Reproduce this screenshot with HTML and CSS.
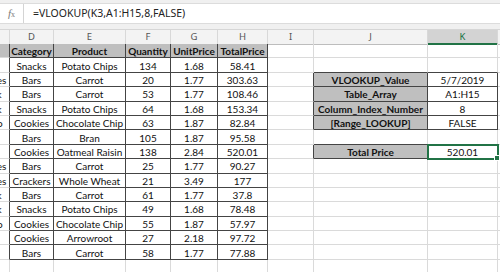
FILE: index.html
```html
<!DOCTYPE html>
<html lang="en">

<head>
    <meta charset="UTF-8">
    <meta name="viewport" content="width=device-width, initial-scale=1.0">
    <title>VLOOKUP Total Price</title>
    <link rel="stylesheet" href="styles.css">
</head>

<body>
    <div class="topbar">
        <div class="formula-bar">
            <div class="fx"><i>f</i><span>x</span></div>
            <div class="formula">=VLOOKUP(K3,A1:H15,8,FALSE)</div>
        </div>
    </div>

    <div class="sheet">
        <!-- column letters (C and L sit mostly off screen) -->
        <div class="row col-heads">
            <div class="ch"></div>
            <div class="ch tb">D</div>
            <div class="ch tb">E</div>
            <div class="ch tb">F</div>
            <div class="ch tb">G</div>
            <div class="ch tb">H</div>
            <div class="ch">I</div>
            <div class="ch">J</div>
            <div class="ch active">K</div>
            <div class="ch"></div>
        </div>

        <div class="row">
            <div class="c city hd rb"></div>
            <div class="c t hd">Category</div>
            <div class="c t hd">Product</div>
            <div class="c t hd">Quantity</div>
            <div class="c t hd">UnitPrice</div>
            <div class="c t hd">TotalPrice</div>
            <div class="c"></div>
            <div class="c"></div>
            <div class="c"></div>
            <div class="c"></div>
        </div>
        <div class="row">
            <div class="c city rb">Boston</div>
            <div class="c t">Snacks</div>
            <div class="c t">Potato Chips</div>
            <div class="c t">134</div>
            <div class="c t">1.68</div>
            <div class="c t">58.41</div>
            <div class="c"></div>
            <div class="c bb"></div>
            <div class="c bb"></div>
            <div class="c"></div>
        </div>
        <div class="row">
            <div class="c city rb">Los Angeles</div>
            <div class="c t">Bars</div>
            <div class="c t">Carrot</div>
            <div class="c t">20</div>
            <div class="c t">1.77</div>
            <div class="c t">303.63</div>
            <div class="c rb"></div>
            <div class="c t hd">VLOOKUP_Value</div>
            <div class="c t">5/7/2019</div>
            <div class="c"></div>
        </div>
        <div class="row">
            <div class="c city rb">New York</div>
            <div class="c t">Bars</div>
            <div class="c t">Carrot</div>
            <div class="c t">53</div>
            <div class="c t">1.77</div>
            <div class="c t">108.46</div>
            <div class="c rb"></div>
            <div class="c t hd">Table_Array</div>
            <div class="c t">A1:H15</div>
            <div class="c"></div>
        </div>
        <div class="row">
            <div class="c city rb">New York</div>
            <div class="c t">Snacks</div>
            <div class="c t">Potato Chips</div>
            <div class="c t">64</div>
            <div class="c t">1.68</div>
            <div class="c t">153.34</div>
            <div class="c rb"></div>
            <div class="c t hd">Column_Index_Number</div>
            <div class="c t">8</div>
            <div class="c"></div>
        </div>
        <div class="row">
            <div class="c city rb">San Diego</div>
            <div class="c t">Cookies</div>
            <div class="c t">Chocolate Chip</div>
            <div class="c t">63</div>
            <div class="c t">1.87</div>
            <div class="c t">82.84</div>
            <div class="c rb"></div>
            <div class="c t hd">[Range_LOOKUP]</div>
            <div class="c t">FALSE</div>
            <div class="c"></div>
        </div>
        <div class="row">
            <div class="c city rb">Boston</div>
            <div class="c t">Bars</div>
            <div class="c t">Bran</div>
            <div class="c t">105</div>
            <div class="c t">1.87</div>
            <div class="c t">95.58</div>
            <div class="c"></div>
            <div class="c bb"></div>
            <div class="c bb"></div>
            <div class="c"></div>
        </div>
        <div class="row">
            <div class="c city rb">Boston</div>
            <div class="c t">Cookies</div>
            <div class="c t">Oatmeal Raisin</div>
            <div class="c t">138</div>
            <div class="c t">2.84</div>
            <div class="c t">520.01</div>
            <div class="c rb"></div>
            <div class="c t hd">Total Price</div>
            <div class="c t selected">520.01</div>
            <div class="c"></div>
        </div>
        <div class="row">
            <div class="c city rb">Los Angeles</div>
            <div class="c t">Bars</div>
            <div class="c t">Carrot</div>
            <div class="c t">25</div>
            <div class="c t">1.77</div>
            <div class="c t">90.27</div>
            <div class="c"></div>
            <div class="c"></div>
            <div class="c"></div>
            <div class="c"></div>
        </div>
        <div class="row">
            <div class="c city rb">Los Angeles</div>
            <div class="c t">Crackers</div>
            <div class="c t">Whole Wheat</div>
            <div class="c t">21</div>
            <div class="c t">3.49</div>
            <div class="c t">177</div>
            <div class="c"></div>
            <div class="c"></div>
            <div class="c"></div>
            <div class="c"></div>
        </div>
        <div class="row">
            <div class="c city rb">New York</div>
            <div class="c t">Bars</div>
            <div class="c t">Carrot</div>
            <div class="c t">61</div>
            <div class="c t">1.77</div>
            <div class="c t">37.8</div>
            <div class="c"></div>
            <div class="c"></div>
            <div class="c"></div>
            <div class="c"></div>
        </div>
        <div class="row">
            <div class="c city rb">New York</div>
            <div class="c t">Snacks</div>
            <div class="c t">Potato Chips</div>
            <div class="c t">49</div>
            <div class="c t">1.68</div>
            <div class="c t">78.48</div>
            <div class="c"></div>
            <div class="c"></div>
            <div class="c"></div>
            <div class="c"></div>
        </div>
        <div class="row">
            <div class="c city rb">San Diego</div>
            <div class="c t">Cookies</div>
            <div class="c t">Chocolate Chip</div>
            <div class="c t">55</div>
            <div class="c t">1.87</div>
            <div class="c t">57.97</div>
            <div class="c"></div>
            <div class="c"></div>
            <div class="c"></div>
            <div class="c"></div>
        </div>
        <div class="row">
            <div class="c city rb">Boston</div>
            <div class="c t">Cookies</div>
            <div class="c t">Arrowroot</div>
            <div class="c t">27</div>
            <div class="c t">2.18</div>
            <div class="c t">97.72</div>
            <div class="c"></div>
            <div class="c"></div>
            <div class="c"></div>
            <div class="c"></div>
        </div>
        <div class="row">
            <div class="c city rb">Boston</div>
            <div class="c t">Bars</div>
            <div class="c t">Carrot</div>
            <div class="c t">58</div>
            <div class="c t">1.77</div>
            <div class="c t">77.88</div>
            <div class="c"></div>
            <div class="c"></div>
            <div class="c"></div>
            <div class="c"></div>
        </div>
        <div class="row">
            <div class="c"></div>
            <div class="c"></div>
            <div class="c"></div>
            <div class="c"></div>
            <div class="c"></div>
            <div class="c"></div>
            <div class="c"></div>
            <div class="c"></div>
            <div class="c"></div>
            <div class="c"></div>
        </div>
    </div>
</body>

</html>
```

FILE: styles.css
```css
body {
    margin: 0;
    padding: 0;
    width: 500px;
    height: 272px;
    overflow: hidden;
    background: #fff;
    font-family: Lato, "Liberation Sans", sans-serif;
}

.topbar {
    height: 30px;
    box-sizing: border-box;
    padding-top: 3px;
    background: #f0f0f0;
    border-bottom: 1px solid #d6d6d6;
}

.formula-bar {
    display: flex;
    height: 19px;
    background: #fff;
    border-top: 1px solid #dcdcdc;
    border-bottom: 1px solid #dcdcdc;
}

.fx {
    width: 23px;
    border-right: 1px solid #d4d4d4;
    text-align: center;
    color: #7a7a7a;
    font-family: "Liberation Serif", serif;
    font-size: 11px;
    line-height: 19px;
}

.fx span {
    font-size: 8px;
}

.formula {
    padding-left: 9px;
    font-family: "Noto Sans", sans-serif;
    font-size: 10.5px;
    line-height: 19px;
    color: #222;
}

.sheet {
    margin-left: -48px;
}

.row {
    display: grid;
    grid-template-columns: 58px 44px 72px 45px 47px 50px 46px 114px 70px 40px;
    height: 14.4px;
}

.col-heads {
    height: 14px;
    background: #f3f3f3;
}

.ch {
    box-sizing: border-box;
    border-right: 1px solid #d8d8d8;
    border-bottom: 1px solid #bdbdbd;
    text-align: center;
    font-family: "Noto Sans", sans-serif;
    font-size: 9.5px;
    line-height: 13px;
    color: #555;
}

.ch.tb {
    border-bottom-color: #444;
}

.ch.active {
    background: #d3d3d3;
    color: #217346;
    border-bottom: 2px solid #217346;
}

.c {
    box-sizing: border-box;
    display: flex;
    align-items: center;
    justify-content: center;
    padding-top: 1px;
    border-right: 1px solid #dadada;
    border-bottom: 1px solid #dadada;
    font-size: 10px;
    color: #111;
    white-space: nowrap;
    overflow: hidden;
}

/* cells inside a bordered table */
.t {
    border-right-color: #444;
    border-bottom-color: #444;
}

.rb {
    border-right-color: #444;
}

.bb {
    border-bottom-color: #444;
}

.hd {
    background: #bfbfbf;
    font-weight: bold;
}

.selected {
    position: relative;
    overflow: visible;
    outline: 2px solid #217346;
    outline-offset: -1px;
}

.selected::after {
    content: "";
    position: absolute;
    right: -3px;
    bottom: -3px;
    width: 4px;
    height: 4px;
    background: #217346;
    border: 1px solid #fff;
}
```
